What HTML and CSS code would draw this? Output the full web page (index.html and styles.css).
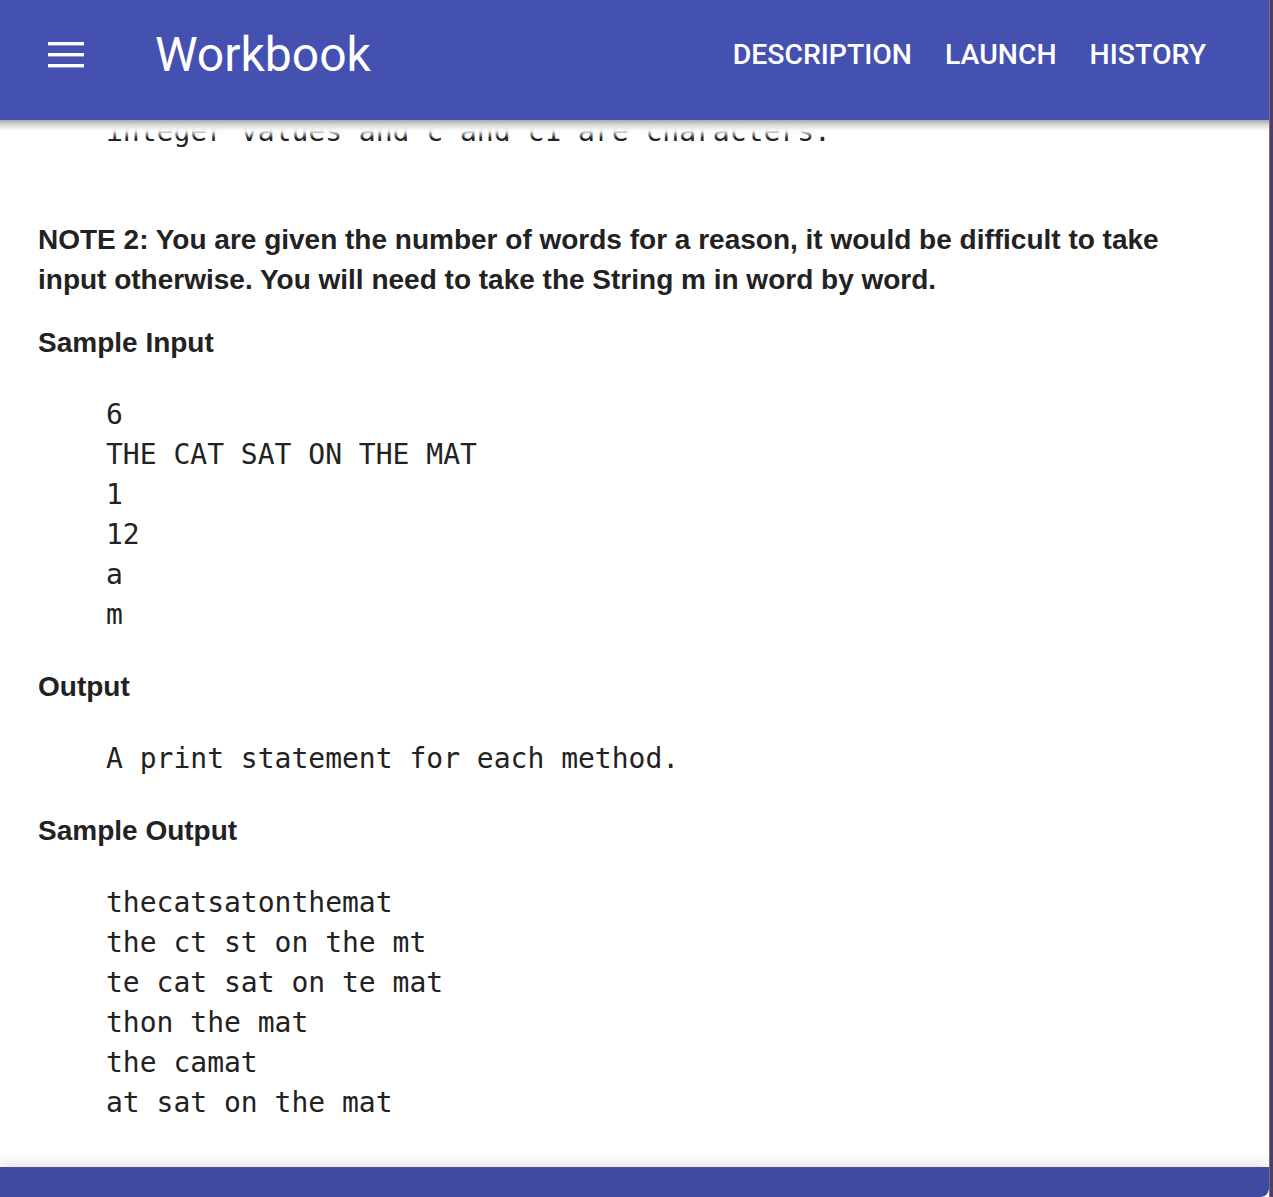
FILE: index.html
```html
<!DOCTYPE html>
<html lang="en">
<head>
<meta charset="utf-8">
<title>Workbook</title>
<link rel="stylesheet" href="styles.css">
</head>
<body>
<div class="screen">
  <div class="window">
    <header class="appbar">
      <div class="toolbar">
        <button class="menu-btn" aria-label="Menu">
          <svg width="36" height="26" viewBox="0 0 36 26"><rect x="0" y="0" width="36" height="3.4" fill="#fff"/><rect x="0" y="11" width="36" height="3.4" fill="#fff"/><rect x="0" y="22" width="36" height="3.4" fill="#fff"/></svg>
        </button>
        <div class="title">Workbook</div>
        <nav class="nav">
          <a class="nav-link">DESCRIPTION</a>
          <a class="nav-link">LAUNCH</a>
          <a class="nav-link">HISTORY</a>
        </nav>
      </div>
    </header>
    <main class="content">
      <pre class="code code-top">integer values and c and c1 are characters.</pre>
      <p class="note">NOTE 2: You are given the number of words for a reason, it would be difficult to take input otherwise. You will need to take the String m in word by word.</p>
      <h3 class="heading heading-first">Sample Input</h3>
      <pre class="code">6
THE CAT SAT ON THE MAT
1
12
a
m</pre>
      <h3 class="heading">Output</h3>
      <pre class="code">A print statement for each method.</pre>
      <h3 class="heading">Sample Output</h3>
      <pre class="code">thecatsatonthemat
the ct st on the mt
te cat sat on te mat
thon the mat
the camat
at sat on the mat</pre>
    </main>
    <footer class="bottombar"></footer>
  </div>
  <div class="edge"></div>
</div>
</body>
</html>
```

FILE: styles.css
```css
html, body {
  margin: 0;
  padding: 0;
  height: 100%;
  background: #ffffff;
}
.screen {
  display: flex;
  height: 1197px;
  overflow: hidden;
}
.window {
  position: relative;
  flex: 1;
  display: flex;
  flex-direction: column;
  background: #ffffff;
  overflow: hidden;
  border-bottom-right-radius: 8px;
}
.edge {
  width: 3px;
  background: #4b3e69;
  border-left: 1px solid #75727f;
}
.appbar {
  position: absolute;
  top: 0;
  left: 0;
  right: 0;
  height: 120px;
  background: #4551b1;
  z-index: 2;
}
.appbar::after {
  content: "";
  position: absolute;
  left: 0;
  right: 0;
  top: 120px;
  height: 18px;
  background: linear-gradient(to bottom,
    rgba(170,170,170,1) 0%,
    rgba(222,222,222,1) 30%,
    rgba(252,252,252,0.95) 60%,
    rgba(255,255,255,0) 100%);
}
.toolbar {
  height: 110px;
  display: flex;
  align-items: center;
  padding: 0 63px 0 48px;
}
.menu-btn {
  background: none;
  border: 0;
  padding: 0;
  margin: 0;
  width: 36px;
  height: 26px;
  display: flex;
}
.title {
  margin-left: 71px;
  font-family: Roboto, "Noto Sans", sans-serif;
  font-size: 48px;
  font-weight: 400;
  color: #ffffff;
  line-height: 1;
}
.nav {
  margin-left: auto;
  display: flex;
  gap: 33px;
}
.nav-link {
  font-family: Roboto, "Noto Sans", sans-serif;
  font-size: 28.4px;
  font-weight: 500;
  color: #ffffff;
  line-height: 1;
}
.content {
  flex: 1;
  padding: 112px 0 0 38px;
  color: #222222;
}
.code {
  margin: 0 0 0 68px;
  font-family: "DejaVu Sans Mono", "Liberation Mono", monospace;
  font-size: 28px;
  line-height: 40px;
  color: #222222;
  white-space: pre;
}
.code-top {
  margin-bottom: 68px;
}
.note {
  margin: 0;
  font-family: "Liberation Sans", Arial, sans-serif;
  font-weight: 700;
  font-size: 28px;
  line-height: 40px;
  color: #222222;
  max-width: 1190px;
}
.heading {
  margin: 32px 0;
  font-family: "Liberation Sans", Arial, sans-serif;
  font-weight: 700;
  font-size: 28px;
  line-height: 40px;
  color: #222222;
}
.heading-first {
  margin-top: 23px;
}
.bottombar {
  height: 30px;
  background: #3f4ba0;
  box-shadow: 0 -4px 14px rgba(0,0,0,0.12);
  border-bottom-right-radius: 8px;
}
```
